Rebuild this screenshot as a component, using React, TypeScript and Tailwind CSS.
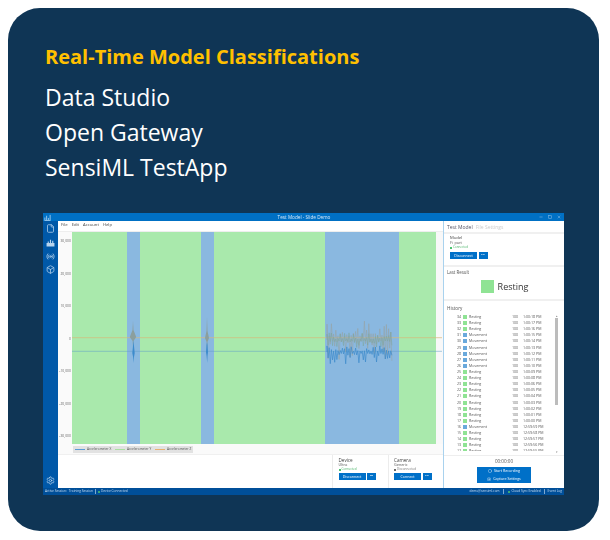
import { Box, File, Radio, Settings, Circle, Camera, Minus, Square, X } from "lucide-react";

const history: [number, string, string][] = [
  [34, "Resting", "1:00:18 PM"],
  [33, "Resting", "1:00:17 PM"],
  [32, "Resting", "1:00:16 PM"],
  [31, "Movement", "1:00:15 PM"],
  [30, "Movement", "1:00:14 PM"],
  [29, "Movement", "1:00:13 PM"],
  [28, "Movement", "1:00:12 PM"],
  [27, "Movement", "1:00:11 PM"],
  [26, "Movement", "1:00:10 PM"],
  [25, "Resting", "1:00:09 PM"],
  [24, "Resting", "1:00:08 PM"],
  [23, "Resting", "1:00:06 PM"],
  [22, "Resting", "1:00:05 PM"],
  [21, "Resting", "1:00:04 PM"],
  [20, "Resting", "1:00:03 PM"],
  [19, "Resting", "1:00:02 PM"],
  [18, "Resting", "1:00:01 PM"],
  [17, "Resting", "1:00:00 PM"],
  [16, "Movement", "12:59:59 PM"],
  [15, "Resting", "12:59:58 PM"],
  [14, "Resting", "12:59:57 PM"],
  [13, "Resting", "12:59:56 PM"],
  [12, "Resting", "12:59:55 PM"],
];

const axisLabels = ["30,000", "20,000", "10,000", "0", "-10,000", "-20,000", "-30,000"];

// plot bands, left to right
const bands = [
  ["w-[55px]", "bg-[#a9e9ac]"],
  ["w-[13px]", "bg-[#8ab8e0]"],
  ["w-[61px]", "bg-[#a9e9ac]"],
  ["w-[13px]", "bg-[#8ab8e0]"],
  ["w-[111px]", "bg-[#a9e9ac]"],
  ["w-[74px]", "bg-[#8ab8e0]"],
  ["w-[37px]", "bg-[#a9e9ac]"],
];

// noisy trace between two x values, coordinates are local to the plot
function noise(x0: number, x1: number, mid: number, up: number, down: number, seed: number) {
  let s = seed;
  let d = `M${x0} ${mid}`;
  let flip = false;
  for (let x = x0; x <= x1; x += 1.1) {
    s = (s * 9301 + 49297) % 233280;
    const r = s / 233280;
    const amp = 0.12 + r * r * 0.88;
    d += `L${x.toFixed(1)} ${(mid + (flip ? down : -up) * amp).toFixed(1)}`;
    flip = !flip;
  }
  return d;
}

function Spike({ x, top, bottom, mid, color, w = 1 }: { x: number; top: number; bottom: number; mid: number; color: string; w?: number }) {
  return (
    <path
      d={`M${x} ${top}L${x + 0.5} ${mid - 7}L${x + w * 2} ${mid}L${x + 0.5} ${mid + 4}L${x + 0.2} ${bottom}L${x - 0.4} ${mid + 4}L${x - w * 2} ${mid}L${x - 0.5} ${mid - 7}Z`}
      fill={color}
    />
  );
}

function AppLogo() {
  return (
    <svg viewBox="0 0 16 16" className="w-[7px] h-[7px]" fill="none" stroke="#cfe6fa" strokeWidth="1.6">
      <path d="M2 14V8M6 14V4M10 14V9M14 14V2M1 15h14" />
    </svg>
  );
}

function ChartIcon() {
  return (
    <svg viewBox="0 0 16 16" className="w-[9px] h-[9px]" fill="#b8d4ee">
      <path d="M1 15V9h2V6h2v3h2V3h2v6h2V5h2v4h2v6z" />
    </svg>
  );
}

function SmallButtons({ label }: { label: string }) {
  return (
    <div className="flex gap-[1.5px]">
      <div className="w-[27px] h-[7px] bg-[#0070c8] text-white text-[3.6px] leading-[7px] text-center">{label}</div>
      <div className="w-[9px] h-[7px] bg-[#0070c8] text-white text-[3px] leading-[6.5px] text-center">•••</div>
    </div>
  );
}

function DeviceCard({ title, name, status, on, label }: { title: string; name: string; status: string; on: boolean; label: string }) {
  return (
    <div className="w-[55.5px] border-l border-[#ececec] pl-[5.5px] pt-[2px]">
      <div className="text-[4.6px] leading-[6px] text-[#444]">{title}</div>
      <div className="text-[3.8px] leading-[4px] text-[#555]">{name}</div>
      <div className={`flex items-center gap-[1px] text-[3px] leading-[5px] ${on ? "text-[#4cb56a]" : "text-[#777]"}`}>
        <span className={`w-[2px] h-[2px] ${on ? "bg-[#4cc26f]" : "bg-[#666]"}`} />
        {status}
      </div>
      <div className="mt-[1px]">
        <SmallButtons label={label} />
      </div>
    </div>
  );
}

function Band() {
  return <div className="h-[2px] bg-[#f0f0f0] shrink-0" />;
}

export default function App() {
  return (
    <div className="w-[610px] h-[540px] bg-white pt-[8px] pl-[8px] font-['Open_Sans','Noto_Sans',sans-serif]">
      <div className="w-[591px] h-[523px] rounded-[32px] bg-[#0f3555] pt-[35px] pl-[35px] flex flex-col">
        <h1 className="pl-[2px] text-[20px] leading-[28px] font-bold text-[#ffc000]">Real-Time Model Classifications</h1>
        <div className="pl-[2px] mt-[9px] text-white text-[23px] leading-[35px]">
          <div>Data Studio</div>
          <div>Open Gateway</div>
          <div>SensiML TestApp</div>
        </div>

        {/* App window */}
        <div className="mt-[28px] w-[521px] h-[282px] flex flex-col bg-white blur-[0.3px]">
          <div className="h-[8px] shrink-0 bg-[#0070c4] flex items-center pl-[1px] pr-[3px] text-[4.7px] text-[#d5e8f8]">
            <AppLogo />
            <div className="flex-1 text-center pl-[18px] leading-[8px]">Test Model - Slide Demo</div>
            <div className="flex items-center gap-[5px]">
              <Minus size={4} />
              <Square size={4} />
              <X size={4} />
            </div>
          </div>

          <div className="flex-1 flex min-h-0">
            {/* Sidebar */}
            <div className="w-[15px] shrink-0 bg-[#0058a8] flex flex-col items-center pt-[3px] text-[#b8d4ee]">
              <File size={9} />
              <div className="mt-[5px]"><ChartIcon /></div>
              <Radio size={9} className="mt-[5px]" />
              <Box size={9} className="mt-[4px]" />
              <Settings size={9} className="mt-auto mb-[3px]" />
            </div>

            {/* Main column */}
            <div className="w-[385px] shrink-0 flex flex-col">
              <div className="h-[8px] flex gap-[4px] pl-[3px] text-[4.2px] leading-[8px] text-[#444]">
                <span>File</span>
                <span>Edit</span>
                <span>Account</span>
                <span>Help</span>
              </div>
              <div className="h-[3px] border-b border-[#eee]" />
              <div className="h-[212px] flex">
                <div className="w-[14px] bg-[#fafafa] flex flex-col gap-[27.5px] pt-[6px] items-end pr-[1px]">
                  {axisLabels.map((a) => (
                    <div key={a} className="text-[3.4px] leading-[5px] text-[#666]">{a}</div>
                  ))}
                </div>
                <div className="relative w-[371px] bg-[#f8f8f8] flex">
                  {bands.map(([w, c], i) => (
                    <div key={i} className={`${w} ${c}`} />
                  ))}
                  <svg className="absolute inset-0" width="371" height="212" viewBox="0 0 371 212">
                    <path d="M0 105.7H370" stroke="#d8b878" strokeWidth="1.2" opacity="0.55" />
                    <path d="M0 119.3H370" stroke="#5fa0c8" strokeWidth="0.8" opacity="0.65" />
                    <Spike x={61} top={89} bottom={118} mid={105} color="#8b9f9e" w={1.6} />
                    <Spike x={61.5} top={108} bottom={131} mid={121} color="#3d8bcc" w={0.6} />
                    <Spike x={135} top={85} bottom={118} mid={106} color="#8b9f9e" />
                    <Spike x={135} top={110} bottom={131} mid={120} color="#3d8bcc" w={0.5} />
                    <path d={noise(255, 321, 106, 17, 24, 17)} stroke="#97a4a8" strokeWidth="0.7" fill="none" opacity="0.85" />
                    <path d={noise(255, 321, 108, 8, 8, 91)} stroke="#7ea69a" strokeWidth="0.7" fill="none" opacity="0.7" />
                    <path d={noise(255, 321, 120, 7, 12, 43)} stroke="#3d8bcc" strokeWidth="0.7" fill="none" />
                  </svg>
                </div>
              </div>
              <div className="h-[10px] bg-[#fafafa] pl-[15px] pt-[2px]">
                <div className="w-[120px] h-[7px] bg-[#e2e2e2] flex items-center pl-[2px] text-[3.2px] text-[#555] whitespace-nowrap">
                  <span className="w-[10px] h-px bg-[#5b9bd5]" />
                  <span className="ml-[2px] w-[28px]">Accelerometer X</span>
                  <span className="w-[10px] h-px bg-[#a9e0a0]" />
                  <span className="ml-[2px] w-[28px]">Accelerometer Y</span>
                  <span className="w-[10px] h-px bg-[#e8b070]" />
                  <span className="ml-[2px]">Accelerometer Z</span>
                </div>
              </div>
              <div className="flex-1 flex justify-end border-t border-[#f0f0f0]">
                <DeviceCard title="Device" name="Ultra" status="Connected" on label="Disconnect" />
                <DeviceCard title="Camera" name="Generic" status="Disconnected" on={false} label="Connect" />
              </div>
            </div>

            {/* Right panel */}
            <div className="flex-1 flex flex-col border-l border-[#a9d2ee] min-w-0">
              <div className="h-[11px] shrink-0 flex gap-[3px] pl-[3px] text-[5px] leading-[13px]">
                <span className="text-[#556]">Test Model</span>
                <span className="text-[#ccc]">File Settings</span>
              </div>
              <Band />
              <div className="h-[31px] shrink-0 pl-[6px] pt-[1px]">
                <div className="text-[4.2px] leading-[6px] text-[#444]">Model</div>
                <div className="text-[3.8px] leading-[4px] text-[#555]">Fi_part</div>
                <div className="flex items-center gap-[1px] text-[3px] leading-[5px] text-[#4cb56a]">
                  <span className="w-[2px] h-[2px] bg-[#4cc26f]" />
                  Connected
                </div>
                <div className="mt-[2px]"><SmallButtons label="Disconnect" /></div>
              </div>
              <Band />
              <div className="h-[32px] shrink-0 pl-[3px] pt-[2px]">
                <div className="text-[4.4px] leading-[6px] text-[#555]">Last Result</div>
                <div className="flex items-center justify-center gap-[4px] mt-[5px] pr-[2px]">
                  <div className="w-[13px] h-[13px] bg-[#8fe394]" />
                  <div className="text-[9px] leading-[13px] text-[#333]">Resting</div>
                </div>
              </div>
              <Band />
              <div className="h-[154px] shrink-0 relative pt-[4px]">
                <div className="pl-[3px] text-[4.6px] leading-[6px] text-[#555]">History</div>
                <div className="mt-[3px] h-[137px] overflow-hidden">
                  {history.map(([n, label, time]) => (
                    <div key={n} className="h-[6.12px] flex items-center text-[3.6px] leading-[6px] text-[#555]">
                      <span className="w-[17px] text-right">{n}</span>
                      <span className={`ml-[2px] w-[4px] h-[4px] ${label === "Resting" ? "bg-[#8fe394]" : "bg-[#6aa9dc]"}`} />
                      <span className="ml-[2px] w-[43px]">{label}</span>
                      <span className="w-[11px]">100</span>
                      <span>{time}</span>
                    </div>
                  ))}
                </div>
                <div className="absolute right-[6px] top-[14px] w-[3px] h-[139px] flex flex-col items-center">
                  <div className="w-[3px] h-[3px] text-[3px] leading-[3px] text-[#888] text-center">▴</div>
                  <div className="w-[3px] h-[87px] bg-[#bcbcbc]" />
                  <div className="mt-auto w-[3px] h-[3px] text-[3px] leading-[3px] text-[#888] text-center">▾</div>
                </div>
              </div>
              <div className="flex-1 border-t border-[#eee] flex flex-col items-center">
                <div className="text-[4.6px] leading-[11px] text-[#555]">00:00:00</div>
                <div className="w-[54px] h-[7.5px] bg-[#0070c8] text-white text-[3.6px] flex items-center justify-center gap-[2px]">
                  <Circle size={4} />
                  Start Recording
                </div>
                <div className="w-[54px] h-[7.5px] mt-[0.5px] bg-[#0070c8] text-white text-[3.6px] flex items-center justify-center gap-[2px]">
                  <Camera size={4} />
                  Capture Settings
                </div>
              </div>
            </div>
          </div>

          {/* Status bar */}
          <div className="h-[7px] shrink-0 bg-[#004f99] flex items-center pl-[2px] pr-[2px] text-[3.2px] text-[#c9def2]">
            <span>Active Session:</span>
            <span className="ml-[2px]">Training Session</span>
            <span className="ml-[2px] w-px h-[5px] bg-[#7fa9d0]" />
            <span className="ml-[2px] w-[2px] h-[2px] rounded-full bg-[#4cc26f]" />
            <span className="ml-[1px]">Device Connected</span>
            <span className="ml-auto">demo@sensiml.com</span>
            <span className="ml-[3px] w-px h-[5px] bg-[#7fa9d0]" />
            <span className="ml-[4px] w-[2px] h-[2px] rounded-full bg-[#4cc26f]" />
            <span className="ml-[2px]">Cloud Sync Enabled</span>
            <span className="ml-[3px] w-px h-[5px] bg-[#7fa9d0]" />
            <span className="ml-[3px]">Event Log</span>
          </div>
        </div>
      </div>
    </div>
  );
}
